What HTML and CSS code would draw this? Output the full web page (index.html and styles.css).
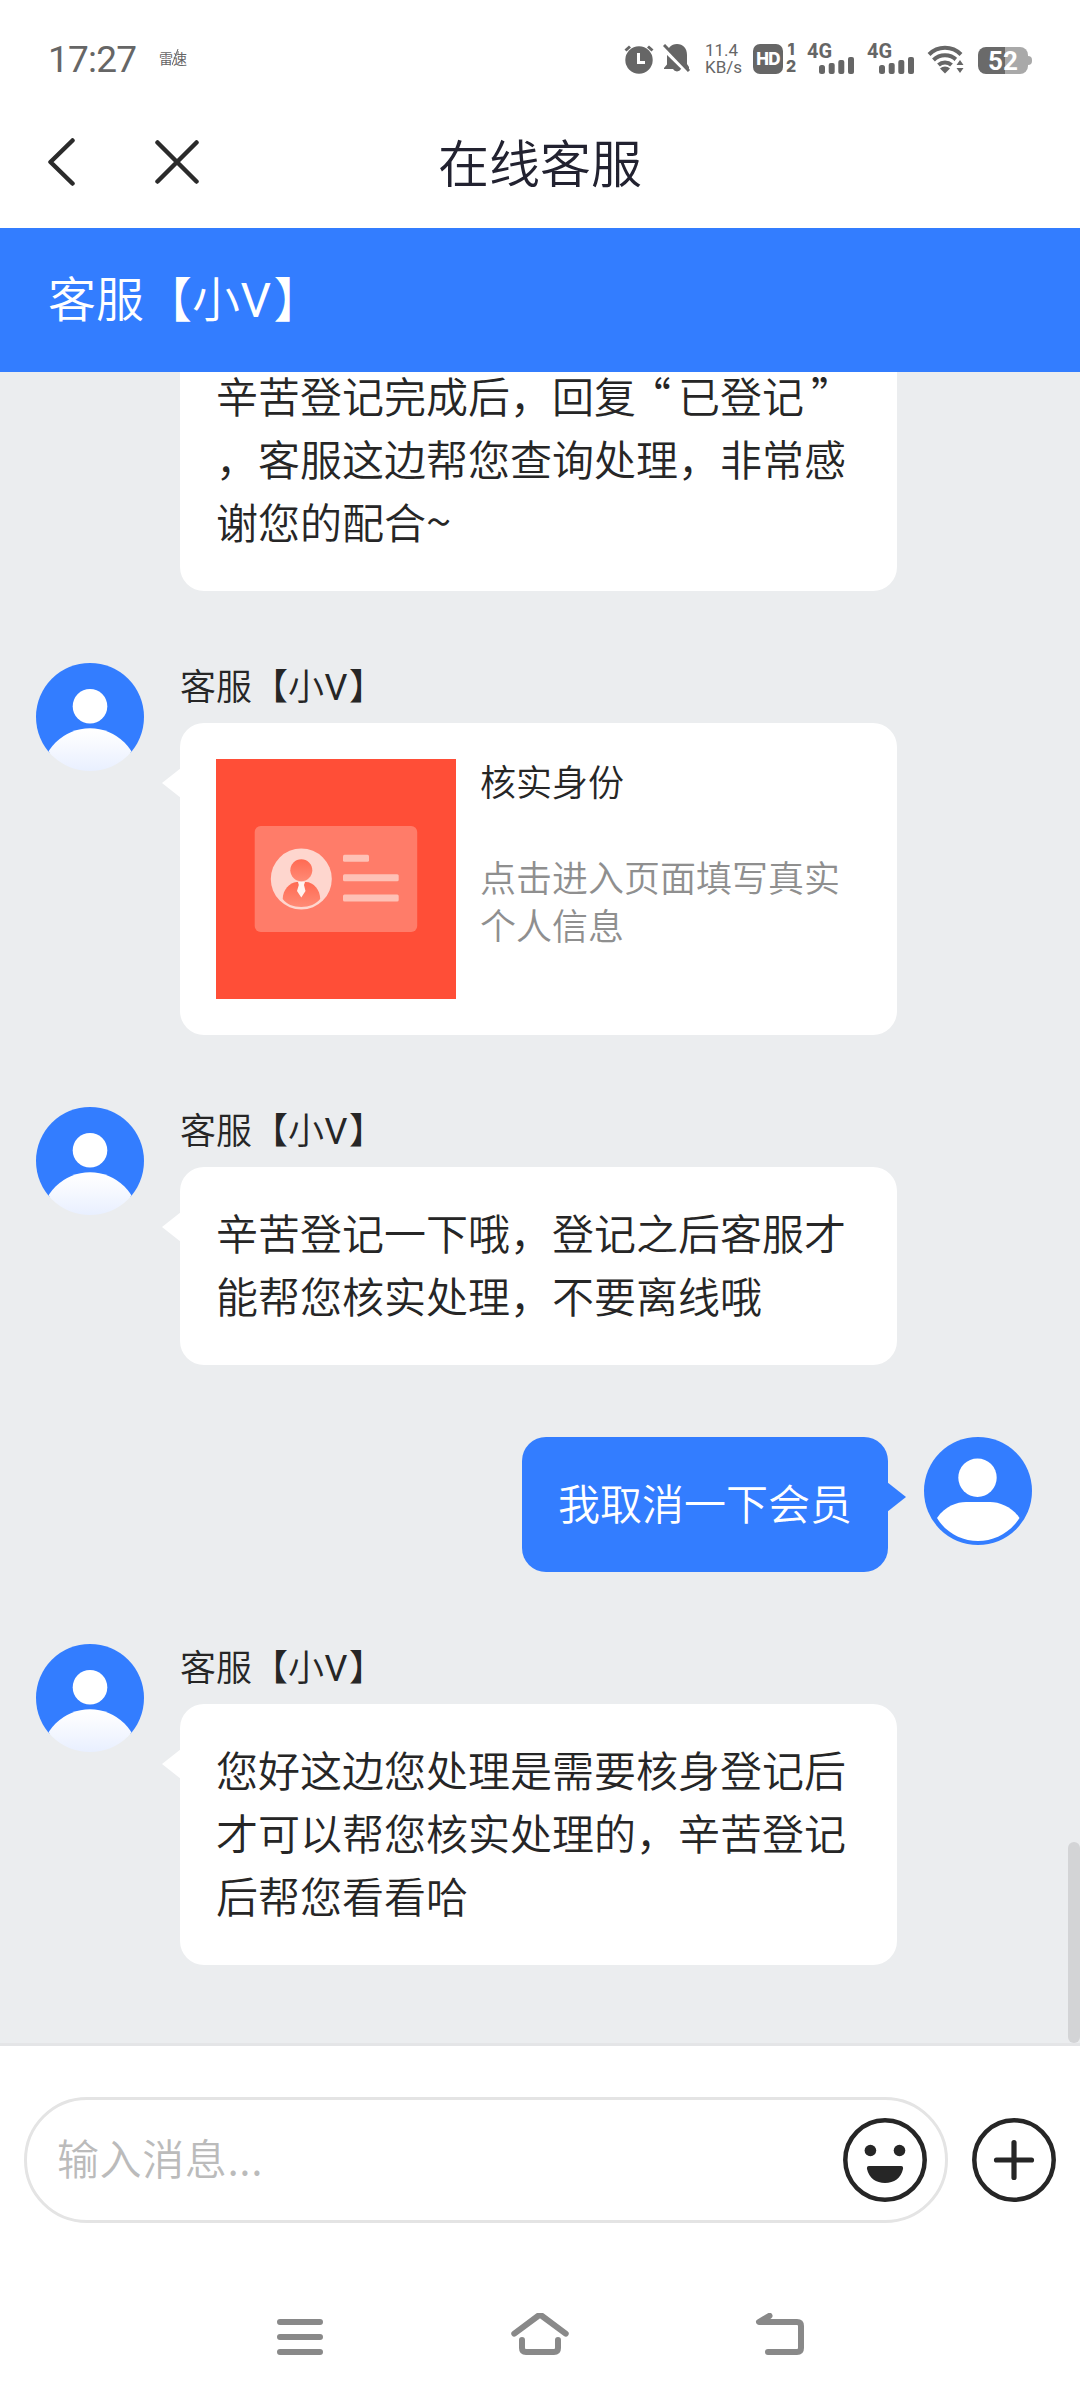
FILE: index.html
```html
<!DOCTYPE html>
<html lang="zh-CN">
<head>
<meta charset="utf-8">
<title>在线客服</title>
<link rel="stylesheet" href="styles.css">
</head>
<body>
<svg class="defs" width="0" height="0" aria-hidden="true">
  <defs>
    <linearGradient id="torso" x1="0" y1="0" x2="0" y2="1">
      <stop offset="0" stop-color="#fff"/><stop offset=".1" stop-color="#fbfcff"/><stop offset=".45" stop-color="#e8efff"/>
    </linearGradient>
    <linearGradient id="person" x1="0" y1="0" x2="0" y2="1">
      <stop offset="0" stop-color="#ff6a52"/><stop offset="1" stop-color="#ff8b76"/>
    </linearGradient>
    <clipPath id="round"><circle cx="54" cy="54" r="54"/></clipPath>
    <symbol id="agent" viewBox="0 0 108 108">
      <g clip-path="url(#round)">
        <rect width="108" height="90" fill="#337dff"/>
        <circle cx="54" cy="43.3" r="17.3" fill="#fff"/>
        <circle cx="54" cy="114" r="48.7" fill="url(#torso)"/>
      </g>
    </symbol>
    <symbol id="signal" viewBox="0 0 36 17">
      <rect x="0" y="8" width="6" height="9" rx="2.5"/>
      <rect x="9.7" y="6" width="6" height="11" rx="2"/>
      <rect x="19.3" y="3" width="6" height="14" rx="2"/>
      <rect x="29" y="0" width="6" height="17" rx="2"/>
    </symbol>
  </defs>
</svg>
<div class="screen">
  <header class="status">
    <span class="time">17:27</span>
    <span class="app">雷速<svg class="app-mark" width="10" height="18" viewBox="0 0 10 18" fill="none" stroke="#666" stroke-width="1"><path d="M6 0 0 16M6 2v4"/></svg></span>
    <div class="indicators">
      <svg class="alarm" width="30" height="30" viewBox="0 0 30 30"><circle cx="15" cy="16" r="13.7" fill="#666"/><path d="M1.5 6.5 6 2.5M28.5 6.5 24 2.5" stroke="#666" stroke-width="3"/><path d="M14.5 9v9.500H21" fill="none" stroke="#fff" stroke-width="3"/></svg>
      <svg class="bell" width="28" height="30" viewBox="0 0 28 30"><path d="M14 0C8 0 4 4.500 4 11v9.500L1 24v1h9a4.500 4.500 0 0 0 8 0h8v-2l-2-3v-9C24 4 20 0 14 0z" fill="#666"/><path d="M-1 2.500 27 30" stroke="#fff" stroke-width="5"/><path d="M1 1 26 27" stroke="#666" stroke-width="3"/></svg>
      <div class="speed"><span>11.4</span><span>KB/s</span></div>
      <div class="hd">HD</div>
      <div class="sims"><span>1</span><span>2</span></div>
      <div class="cell"><span>4G</span><svg width="36" height="17" fill="#666"><use href="#signal"/></svg></div>
      <div class="cell"><span>4G</span><svg width="36" height="17" fill="#666"><use href="#signal"/></svg></div>
      <svg class="wifi" width="38" height="30" viewBox="0 0 38 30"><g fill="none" stroke="#666" stroke-width="4"><path d="M2 10.500a22.500 22.500 0 0 1 32 0"/><path d="M6.500 16a16.200 16.200 0 0 1 23 0"/><path d="M11.500 21a9.500 9.500 0 0 1 13 0"/></g><path d="M13 24.500a7 7 0 0 1 10 0L18 29.500z" fill="#666"/><path d="M26 30V19l4-5h8v16z" fill="#fff"/><path d="m33 16 3.500 5h-7zM33 29l3.500-5h-7z" fill="#666"/></svg>
      <div class="battery">52</div>
    </div>
  </header>

  <nav class="titlebar">
    <svg width="28" height="48" viewBox="0 0 28 48" fill="none" stroke="#2b2b2b" stroke-width="4.500" stroke-linecap="round" stroke-linejoin="round"><path d="M24.500 2.500 2.500 24l22 21.500"/></svg>
    <svg width="44" height="44" viewBox="0 0 44 44" fill="none" stroke="#2b2b2b" stroke-width="4.500" stroke-linecap="round"><path d="m2.500 2.500 39 39m0-39-39 39"/></svg>
    <h1>在线客服</h1>
  </nav>

  <div class="agentbar">客服【小<span class="lat">V</span>】</div>

  <main class="chat">
    <article class="msg">
      <div class="bubble">辛苦登记完成后，回复<span class="open">“</span>已登记<span class="close">”</span><br>，客服这边帮您查询处理，非常感<br>谢您的配合<span class="tilde">~</span></div>
    </article>

    <article class="msg">
      <svg class="avatar"><use href="#agent"/></svg>
      <div class="body">
        <div class="name">客服【小<span class="lat">V</span>】</div>
        <div class="bubble tail card">
          <svg class="thumb" width="240" height="240" viewBox="0 0 240 240">
            <rect width="240" height="240" fill="#ff4e37"/>
            <rect x="38.700" y="67" width="162.500" height="106" rx="6" fill="#ff7c69"/>
            <circle cx="85.300" cy="120" r="30.500" fill="#fed6ce"/>
            <circle cx="85.300" cy="111.300" r="11" fill="url(#person)"/>
            <path d="M66.700 140c0-9 7-16.500 14-17h9c8 0 14.500 8 14.500 17-4 5-11 8-19 8s-15-3-18.500-8z" fill="url(#person)"/>
            <path d="M82 123h7l-1 3 1.500 6-4.200 6.500L81 132l1.800-6z" fill="#fff3ef"/>
            <g fill="#fec1b6"><rect x="127" y="95.700" width="26" height="7" rx="1.500"/><rect x="127" y="115.200" width="55.700" height="7" rx="1.500"/><rect x="127" y="135.500" width="55.700" height="7" rx="1.500"/></g>
          </svg>
          <div class="card-text">
            <div class="card-title">核实身份</div>
            <div class="card-desc">点击进入页面填写真实个人信息</div>
          </div>
        </div>
      </div>
    </article>

    <article class="msg">
      <svg class="avatar"><use href="#agent"/></svg>
      <div class="body">
        <div class="name">客服【小<span class="lat">V</span>】</div>
        <div class="bubble tail">辛苦登记一下哦，登记之后客服才<br>能帮您核实处理，不要离线哦</div>
      </div>
    </article>

    <article class="msg mine">
      <div class="bubble tail">我取消一下会员</div>
      <svg class="avatar" viewBox="0 0 108 108"><circle cx="54" cy="54" r="54" fill="#337dff"/><circle cx="53.500" cy="40.700" r="19.200" fill="#fff"/><path d="M13 81C21 69 33 65 42 65h24c10 0 22 5 29.500 16C86 96 70 104 54 104S22 96 13 81z" fill="#fff"/></svg>
    </article>

    <article class="msg">
      <svg class="avatar"><use href="#agent"/></svg>
      <div class="body">
        <div class="name">客服【小<span class="lat">V</span>】</div>
        <div class="bubble tail">您好这边您处理是需要核身登记后<br>才可以帮您核实处理的，辛苦登记<br>后帮您看看哈</div>
      </div>
    </article>
    <div class="scrollbar"></div>
  </main>

  <footer class="composer">
    <div class="input">
      <span class="placeholder">输入消息...</span>
      <svg width="84" height="84" viewBox="0 0 84 84"><circle cx="42" cy="42" r="39.700" fill="none" stroke="#262626" stroke-width="4.500"/><g fill="#262626"><circle cx="27.400" cy="32.500" r="5.800"/><circle cx="56.500" cy="32.500" r="5.800"/><path d="M26 48h32q2.500 0 2 3C58 60 51 65 42 65S26 60 24 51q-.5-3 2-3z"/></g></svg>
    </div>
    <svg width="84" height="84" viewBox="0 0 84 84" fill="none" stroke="#262626" stroke-linecap="round"><circle cx="42" cy="42" r="39.700" stroke-width="4.500"/><path d="M42 24.500v35M24.500 42h35" stroke-width="5.200"/></svg>
  </footer>

  <nav class="sysnav">
    <svg width="60" height="48" viewBox="0 0 60 48"><path d="M10 9h40M10 24h40M10 39h40"/></svg>
    <svg width="60" height="48" viewBox="0 0 60 48"><path d="M4.300 20.700 28 3q2-1.500 4 0l23.700 17.700M12 27v8q0 4 4 4h28q4 0 4-4v-8"/></svg>
    <svg width="60" height="48" viewBox="0 0 60 48"><path d="M19.500 2.800 9 9h38q4 0 4 4v22q0 4-4 4H18"/></svg>
  </nav>
</div>
</body>
</html>
```
FILE: styles.css
```css
* { box-sizing: border-box; }
body {
  margin: 0;
  background: #fff;
  color: #262626;
  font-family: "Noto Sans CJK SC", sans-serif;
  font-weight: 350;
  text-spacing-trim: space-all;
}
svg { display: block; flex: none; }
.defs { position: absolute; }
.screen { width: 1080px; height: 2400px; display: flex; flex-direction: column; overflow: hidden; }

/* status bar */
.status { height: 98px; padding: 20px 48px 0; display: flex; align-items: center; color: #666; font-family: Roboto, "Noto Sans CJK SC", sans-serif; }
.time { width: 111px; font-size: 37px; font-weight: 400; letter-spacing: -.8px; white-space: nowrap; }
.app { position: relative; font-size: 14px; line-height: 20px; font-weight: 400; }
.app-mark { position: absolute; left: 13px; top: 0; }
.indicators { margin-left: auto; display: flex; align-items: center; height: 30px; }
.bell { margin-left: 9px; }
.speed { width: 36px; margin-left: 14px; display: flex; flex-direction: column; font-size: 17px; line-height: 17px; font-weight: 400; white-space: nowrap; }
.hd { width: 30px; height: 30px; margin-left: 12px; border-radius: 7px; background: #666; color: #fff; font-family: Inter, sans-serif; font-size: 17px; line-height: 30px; font-weight: 800; text-align: center; letter-spacing: -.8px; }
.sims { width: 12px; margin-left: 2px; display: flex; flex-direction: column; text-align: center; font-family: Inter, sans-serif; font-size: 16px; line-height: 16px; font-weight: 800; }
.sims span { height: 16px; margin: -1px 0 2px; }
.cell { width: 48px; height: 30px; margin-left: 10px; display: flex; flex-direction: column; }
.cell + .cell { margin-left: 12px; }
.cell span { height: 13px; font-size: 20px; line-height: 15px; font-weight: 700; }
.cell svg { margin-left: 12px; }
.wifi { margin-left: 12px; }
.battery { position: relative; width: 50px; height: 27px; margin: 2px 4px 0 13px; border-radius: 8px; background: linear-gradient(90deg, #6a6a6a 27px, #a9a9a9 27px); color: #fff; font-size: 26px; line-height: 28px; font-weight: 700; text-align: center; }
.battery::after { content: ""; position: absolute; left: 50px; top: 9px; width: 4px; height: 9px; border-radius: 0 4px 4px 0; background: #a9a9a9; }

/* title bar */
.titlebar { height: 130px; padding: 0 48px 2px; display: grid; grid-template-columns: 107px 1fr 108px; align-items: center; position: relative; }
.titlebar h1 { position: absolute; inset: 0; margin: 0; text-align: center; font-size: 51px; line-height: 127px; font-weight: 350; color: #222230; }

.agentbar { height: 144px; padding-left: 48px; background: #337dff; color: #fff; font-size: 48px; line-height: 137px; }
.lat { margin: 0 .05em 0 .01em; font-family: Roboto, sans-serif; font-weight: 400; }

/* conversation */
.chat { position: relative; height: 1674px; padding: 0 36px 78px; border-bottom: 3px solid #e4e5e7; background: #ebedef; display: flex; flex-direction: column; justify-content: flex-end; gap: 72px; overflow: hidden; }
.msg { display: flex; flex: none; gap: 36px; align-items: flex-start; }
.msg > .bubble:first-child { margin-left: 144px; }
.avatar { width: 108px; height: 108px; }
.name { height: 60px; font-size: 36px; line-height: 43px; white-space: nowrap; }
.bubble { position: relative; width: 717px; padding: 33px 36px 39px; border-radius: 24px; background: #fff; font-size: 42px; line-height: 63px; white-space: nowrap; }
.open { margin: 0 7px 0 -7px; }
.close { margin-left: 7px; }
.tilde { font-size: 46px; line-height: 1; }
.tail::before { content: ""; position: absolute; left: -18px; top: 45px; width: 19px; height: 30px; background: inherit; clip-path: polygon(0 50%, 100% 0, 100% 100%); }
.card { padding: 36px; display: flex; gap: 24px; }
.card-text { margin-top: -3px; display: flex; flex-direction: column; gap: 48px; font-size: 36px; line-height: 48px; white-space: normal; }
.card-desc { color: #8f8f8f; }
.mine { justify-content: flex-end; padding-right: 12px; }
.mine .bubble { width: auto; background: #337dff; color: #fff; }
.mine .tail::before { left: auto; right: -18px; clip-path: polygon(100% 50%, 0 0, 0 100%); }
.scrollbar { position: absolute; right: 0; bottom: 0; width: 12px; height: 201px; border-radius: 6px; background: #d3d4d6; }

/* message input */
.composer { height: 228px; padding: 0 24px; display: flex; align-items: center; gap: 24px; }
.input { width: 924px; height: 126px; padding: 0 18px 0 30px; border: 3px solid #e4e4e4; border-radius: 63px; display: flex; align-items: center; justify-content: space-between; font-size: 42px; line-height: 60px; color: #bbb; }
.placeholder { padding-bottom: 6px; letter-spacing: .6px; }

.sysnav { flex: 1; padding: 39px 270px 0; display: flex; justify-content: space-between; }
.sysnav svg { fill: none; stroke: #898989; stroke-width: 6; stroke-linecap: round; stroke-linejoin: round; }
```
